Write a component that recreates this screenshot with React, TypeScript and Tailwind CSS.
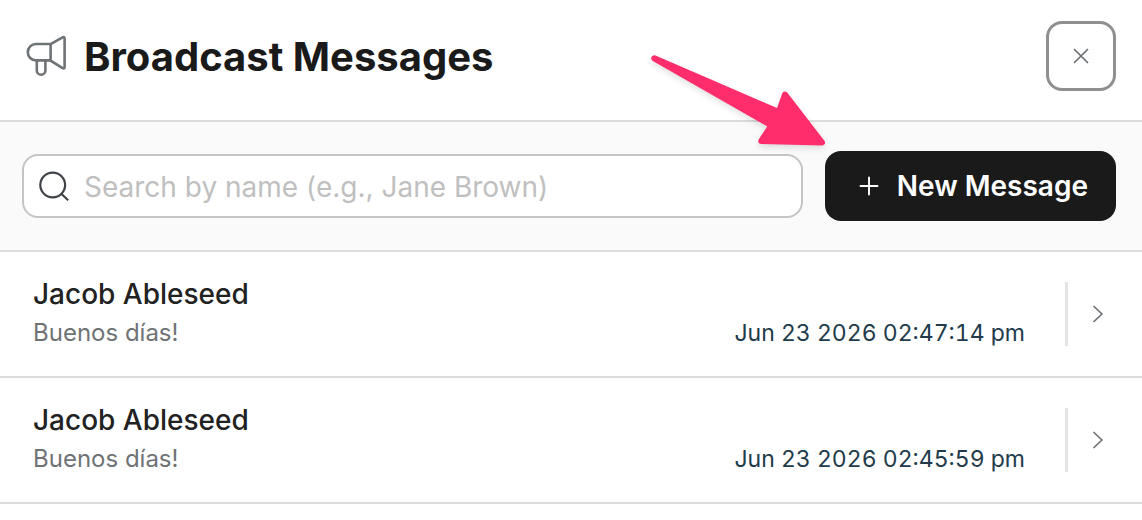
import { useState } from 'react';

const MESSAGES = [
  { id: 1, name: 'Jacob Ableseed', text: 'Buenos días!', sentAt: 'Jun 23 2026 02:47:14 pm' },
  { id: 2, name: 'Jacob Ableseed', text: 'Buenos días!', sentAt: 'Jun 23 2026 02:45:59 pm' },
];

const MegaphoneIcon = () => (
  <svg className="shrink-0" width="40" height="42" viewBox="0 0 40 42" fill="none" stroke="#6f7376" strokeWidth="2.6" strokeLinejoin="round" aria-hidden="true">
    <path d="M24.6 9H10a8.2 8.2 0 0 0 0 16.4H24.6" />
    <path d="M24.6 9.2 36.6 2.4c1-.6 2-.1 2 1v28.8c0 1.1-1 1.6-2 1L24.6 25.6Z" />
    <path d="M10.8 25.4v10a4.3 4.3 0 0 0 8.6 0v-10" />
  </svg>
);

const SearchIcon = () => (
  <svg className="shrink-0" width="32" height="32" viewBox="0 0 32 32" fill="none" stroke="#3f4347" strokeWidth="2.2" aria-hidden="true">
    <circle cx="14.7" cy="15" r="12.4" />
    <path d="M23.5 24 30.2 30.2" />
  </svg>
);

const Pointer = () => (
  <svg className="absolute -left-[185px] -top-[106px] pointer-events-none drop-shadow-md" width="200" height="110" viewBox="0 0 200 110" aria-hidden="true">
    <path d="M14.3 13.3 138.8 67 145 49.6 182 97.5 121.3 96 131.5 80.5Z" fill="#ff2d6b" stroke="#ff2d6b" strokeWidth="6" strokeLinejoin="round" />
  </svg>
);

export default function App() {
  const [query, setQuery] = useState('');
  const visible = MESSAGES.filter(m => m.name.toLowerCase().includes(query.toLowerCase()));

  return (
    <main className="min-h-screen bg-white font-['Inter',sans-serif]">
      <header className="flex items-center justify-between px-[26px] pt-[21px] pb-[29px] border-b-2 border-[#dcdcdc]">
        <div className="flex items-center gap-[18px]">
          <MegaphoneIcon />
          <h1 className="pt-0.5 text-[40px] leading-[48px] font-bold text-[#1a1a1a]">Broadcast Messages</h1>
        </div>
        <button type="button" aria-label="Close" className="flex size-[70px] items-center justify-center rounded-2xl border-3 border-[#8f8f8f]">
          <svg width="16" height="16" viewBox="0 0 16 16" fill="none" stroke="#6b6f72" strokeWidth="1.7" strokeLinecap="round" aria-hidden="true">
            <path d="M1.5 1.5 14.5 14.5M14.5 1.5 1.5 14.5" />
          </svg>
        </button>
      </header>

      <div className="flex items-center gap-[22px] pl-[22px] pr-[26px] py-[29px] bg-[#fafafa] border-b-2 border-[#dcdcdc]">
        <label className="flex h-16 min-w-0 flex-1 items-center gap-[14px] rounded-2xl border-2 border-[#c4c4c4] bg-white px-[14px]">
          <SearchIcon />
          <input
            type="text"
            aria-label="Search by name"
            placeholder="Search by name (e.g., Jane Brown)"
            value={query}
            onChange={e => setQuery(e.target.value)}
            className="min-w-0 flex-1 bg-transparent pt-0.5 text-[28px] leading-9 text-[#1a1a1a] placeholder:text-[#bfbfbf] outline-none"
          />
        </label>
        <div className="relative shrink-0">
          <button type="button" className="flex h-[70px] items-center gap-[18px] rounded-2xl bg-[#1a1a1a] pl-[34px] pr-7 text-[28px] leading-9 font-semibold text-white">
            <svg width="20" height="20" viewBox="0 0 20 20" fill="none" stroke="currentColor" strokeWidth="1.9" strokeLinecap="round" aria-hidden="true">
              <path d="M10 1.5V18.5M1.5 10H18.5" />
            </svg>
            New Message
          </button>
          <Pointer />
        </div>
      </div>

      <ul>
        {visible.map(m => (
          <li key={m.id} className="flex items-center justify-between border-b-2 border-[#dcdcdc] pl-[33px] py-[22px]">
            <div className="pb-0.5">
              <p className="text-[28px] leading-10 font-medium text-[#222222]">{m.name}</p>
              <p className="text-[24px] leading-[38px] text-[#6f7376]">{m.text}</p>
            </div>
            <div className="flex items-center">
              <time className="self-end pr-10 text-[23px] leading-[26px] tabular-nums text-[#213b4a]">{m.sentAt}</time>
              <div className="flex h-16 items-center border-l-3 border-[#e4e4e4] pl-6 pr-[38px]">
                <button type="button" aria-label="Open message">
                  <svg width="12" height="18" viewBox="0 0 12 18" fill="none" stroke="#6b6f72" strokeWidth="1.7" strokeLinecap="round" strokeLinejoin="round" aria-hidden="true">
                    <path d="M2 1.5 10 9 2 16.5" />
                  </svg>
                </button>
              </div>
            </div>
          </li>
        ))}
      </ul>
    </main>
  );
}
